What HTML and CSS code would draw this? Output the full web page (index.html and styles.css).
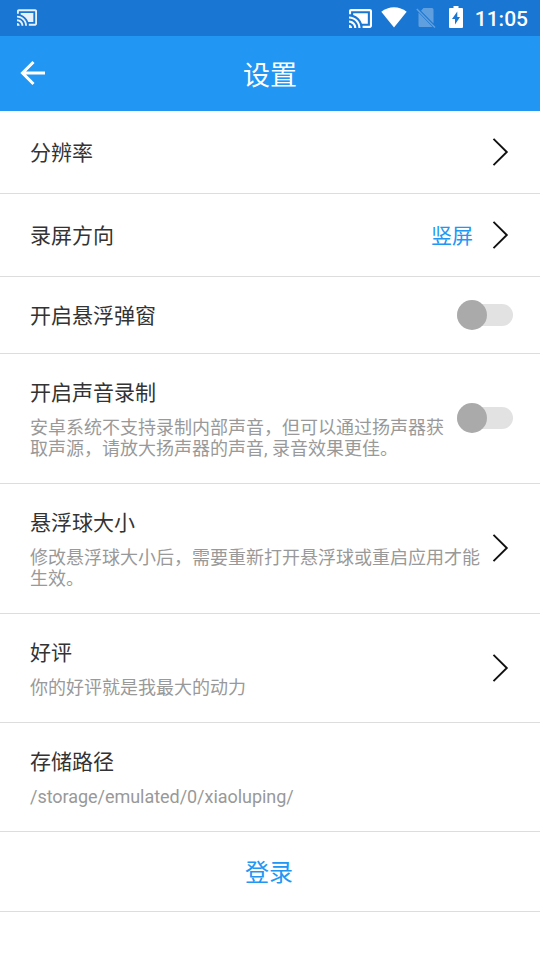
FILE: index.html
```html
<!DOCTYPE html>
<html lang="zh-CN">
<head>
<meta charset="utf-8">
<title>设置</title>
<link rel="stylesheet" href="styles.css">
</head>
<body>
<svg width="0" height="0" class="defs">
  <symbol id="cast" viewBox="1 3 22 18"><path d="M1 18v3h3c0-1.66-1.34-3-3-3zm0-4v2c2.76 0 5 2.24 5 5h2c0-3.87-3.13-7-7-7zm18-7H5v1.63c3.96 1.28 7.09 4.41 8.37 8.37H19V7zM1 10v2c4.97 0 9 4.03 9 9h2c0-6.08-4.93-11-11-11zm20-7H3c-1.1 0-2 .9-2 2v3h2V5h18v14h-7v2h7c1.1 0 2-.9 2-2V5c0-1.1-.9-2-2-2z"/></symbol>
  <symbol id="chevron" viewBox="0 0 18 30"><path d="M2.5 1.8 15.8 15 2.5 28.2" fill="none" stroke="#111" stroke-width="1.9"/></symbol>
</svg>
<div class="status">
  <svg class="cast-small"><use href="#cast"/></svg>
  <div class="status-icons">
    <svg class="cast"><use href="#cast"/></svg>
    <svg class="wifi" viewBox="0 0 26 21"><path d="M13 20.6 0.3 4.8C4 1.7 8.4 0.2 13 0.2S22 1.7 25.7 4.8z"/></svg>
    <svg class="sim" viewBox="0 0 20 21"><path d="M7.500 1H16q1.500 0 1.500 1.500v14L5 3.700zM2.500 5.500 16.500 19.900H4q-1.500 0-1.500-1.500z"/><path d="M.8 2 19 20.500" fill="none" stroke="#fff" stroke-width="1.500"/></svg>
    <svg class="battery" viewBox="0 0 14 22"><path fill-rule="evenodd" d="M4.500 0h5v2H13q1 0 1 1v18q0 1-1 1H1q-1 0-1-1V3q0-1 1-1h3.500zM8.300 5.500 3 13h3v5.500L11 11H8.300z"/></svg>
    <span class="time">11:05</span>
  </div>
</div>
<header class="appbar">
  <svg class="back" viewBox="0 0 26 26"><path d="M25 13H3M13.500 2 2.500 13l11 11" fill="none" stroke="#fff" stroke-width="3"/></svg>
  <h1>设置</h1>
</header>
<main>
  <div class="row tall"><div class="text"><div class="title">分辨率</div></div><svg class="chevron"><use href="#chevron"/></svg></div>
  <div class="row tall"><div class="text"><div class="title">录屏方向</div></div><span class="value">竖屏</span><svg class="chevron"><use href="#chevron"/></svg></div>
  <div class="row short"><div class="text"><div class="title">开启悬浮弹窗</div></div><div class="switch"></div></div>
  <div class="row double"><div class="text"><div class="title">开启声音录制</div><div class="sub">安卓系统不支持录制内部声音，但可以通过扬声器获<br>取声源，请放大扬声器的声音, 录音效果更佳。</div></div><div class="switch"></div></div>
  <div class="row double"><div class="text"><div class="title">悬浮球大小</div><div class="sub">修改悬浮球大小后，需要重新打开悬浮球或重启应用才能<br>生效。</div></div><svg class="chevron"><use href="#chevron"/></svg></div>
  <div class="row single"><div class="text"><div class="title">好评</div><div class="sub">你的好评就是我最大的动力</div></div><svg class="chevron"><use href="#chevron"/></svg></div>
  <div class="row single"><div class="text"><div class="title">存储路径</div><div class="sub path">/storage/emulated/0/xiaoluping/</div></div></div>
  <div class="row login">登录</div>
</main>
</body>
</html>
```
FILE: styles.css
```css
* { box-sizing: border-box; }
body {
  margin: 0;
  width: 540px;
  height: 960px;
  overflow: hidden;
  background: #fff;
  color: #333;
  font-family: Roboto, "Noto Sans CJK SC", sans-serif;
}
svg { display: block; flex: none; }
.defs { position: absolute; }
.status {
  height: 36px;
  padding: 0 12px 0 17px;
  display: flex;
  justify-content: space-between;
  background: #1976d2;
  color: #fff;
  fill: #fff;
}
.cast-small { width: 20px; height: 17px; margin-top: 9px; opacity: .9; }
.status-icons { display: flex; align-items: flex-start; }
.cast { width: 23px; height: 19px; margin: 9px 9px 0 0; }
.wifi { width: 26px; height: 21px; margin: 7px 9px 0 0; }
.sim { width: 20px; height: 21px; margin: 7px 13px 0 0; opacity: .3; }
.battery { width: 14px; height: 22px; margin: 6px 12px 0 0; }
.time { font-size: 21px; font-weight: 500; line-height: 38px; }
.appbar {
  height: 75px;
  padding: 0 20px;
  display: grid;
  grid-template-columns: 26px 1fr 26px;
  align-items: center;
  background: #2196f3;
  color: #fff;
}
.back { width: 26px; height: 26px; margin-bottom: 2px; }
h1 { margin: 0; padding-top: 4px; font-size: 27px; line-height: 36px; font-weight: 400; text-align: center; }
.row {
  display: flex;
  align-items: center;
  padding-left: 30px;
  padding-right: 27px;
  border-bottom: 1px solid #ddd;
}
.tall { height: 83px; }
.short { height: 77px; }
.tall .title, .tall .value, .short .title { padding-top: 2px; }
.double { height: 130px; padding-bottom: 1px; }
.single { height: 109px; }
.text { flex: 1; min-width: 0; white-space: nowrap; }
.title { font-size: 21px; line-height: 30px; }
.sub { margin-top: 9px; font-size: 18px; line-height: 21px; color: #999; }
.path { letter-spacing: -.04px; }
.value { margin-right: 18px; font-size: 21px; line-height: 30px; color: #2196f3; }
.chevron { width: 18px; height: 30px; margin-right: 4px; }
.switch {
  position: relative;
  width: 56px;
  height: 22px;
  border-radius: 11px;
  background: #e2e2e2;
}
.switch::before {
  content: "";
  position: absolute;
  left: 0;
  top: -4px;
  width: 30px;
  height: 30px;
  border-radius: 50%;
  background: #aaa;
}
.login { height: 80px; padding: 0 2px 2px 0; justify-content: center; color: #2196f3; font-size: 24px; }
```
